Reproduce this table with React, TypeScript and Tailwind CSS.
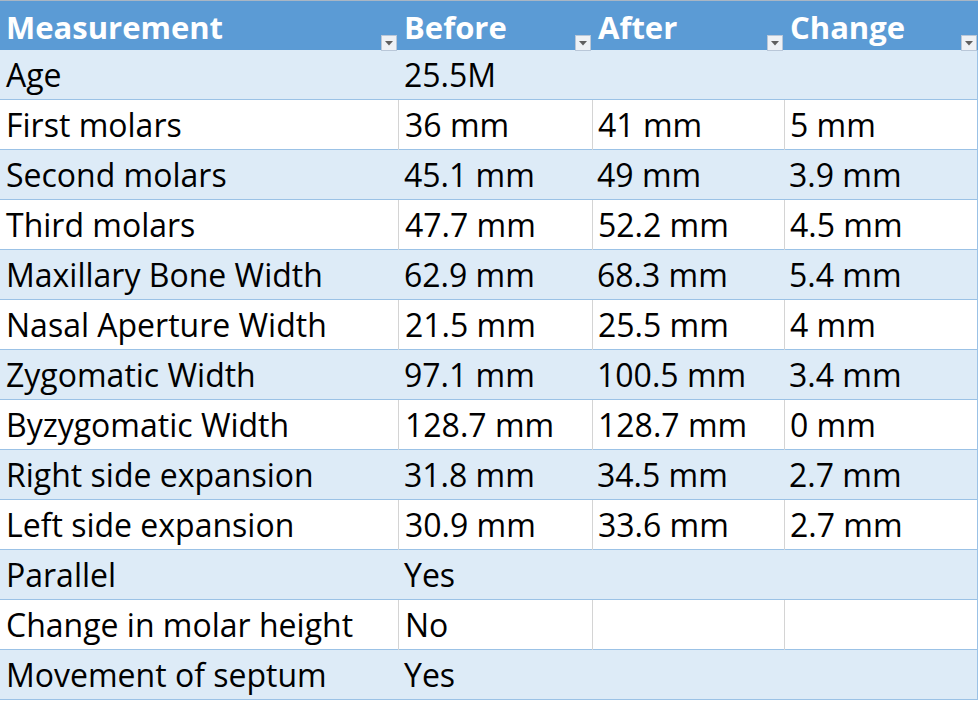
import React from "react";

type Row = { label: string; before: string; after?: string; change?: string };

const rows: Row[] = [
  { label: "Age", before: "25.5M" },
  { label: "First molars", before: "36 mm", after: "41 mm", change: "5 mm" },
  { label: "Second molars", before: "45.1 mm", after: "49 mm", change: "3.9 mm" },
  { label: "Third molars", before: "47.7 mm", after: "52.2 mm", change: "4.5 mm" },
  { label: "Maxillary Bone Width", before: "62.9 mm", after: "68.3 mm", change: "5.4 mm" },
  { label: "Nasal Aperture Width", before: "21.5 mm", after: "25.5 mm", change: "4 mm" },
  { label: "Zygomatic Width", before: "97.1 mm", after: "100.5 mm", change: "3.4 mm" },
  { label: "Byzygomatic Width", before: "128.7 mm", after: "128.7 mm", change: "0 mm" },
  { label: "Right side expansion", before: "31.8 mm", after: "34.5 mm", change: "2.7 mm" },
  { label: "Left side expansion", before: "30.9 mm", after: "33.6 mm", change: "2.7 mm" },
  { label: "Parallel", before: "Yes" },
  { label: "Change in molar height", before: "No", after: "", change: "" },
  { label: "Movement of septum", before: "Yes" },
];

const headers = ["Measurement", "Before", "After", "Change"];

const FilterButton = () => (
  <span className="absolute right-[1px] bottom-[2px] w-[16px] h-[16px] bg-[#eef1f5] border border-[#b9c7d8] flex items-center justify-center">
    <svg width="8" height="5" viewBox="0 0 8 5">
      <path d="M0 0 L8 0 L4 4.5 Z" fill="#5f5f5f" />
    </svg>
  </span>
);

export default function App() {
  return (
    <div
      className="w-[978px] h-[701px] bg-white overflow-hidden border-t border-[#a9b6c4]"
      style={{ fontFamily: "'Open Sans', sans-serif" }}
    >
      {/* header */}
      <div className="grid grid-cols-[398px_194px_192px_194px] h-[49px] bg-[#5b9bd5] text-white">
        {headers.map((h) => (
          <div key={h} className="relative pl-[6px] text-[31px] font-bold leading-[52px] whitespace-nowrap">
            {h}
            <FilterButton />
          </div>
        ))}
      </div>

      {/* body */}
      {rows.map((r, i) => {
        const banded = i % 2 === 0;
        const line = banded ? "" : "border-l border-[#d4d4d4]";
        return (
          <div
            key={r.label}
            className={`grid grid-cols-[398px_194px_192px_194px] h-[50px] border-b border-[#9bc2e6] border-r text-[32px] leading-[50px] text-black ${
              banded ? "bg-[#ddebf7]" : "bg-white"
            }`}
          >
            <div className="pl-[6px] whitespace-nowrap">{r.label}</div>
            <div className={`pl-[6px] whitespace-nowrap ${line}`}>{r.before}</div>
            <div className={`pl-[5px] whitespace-nowrap ${line}`}>{r.after ?? ""}</div>
            <div className={`pl-[5px] whitespace-nowrap ${line}`}>{r.change ?? ""}</div>
          </div>
        );
      })}
    </div>
  );
}
